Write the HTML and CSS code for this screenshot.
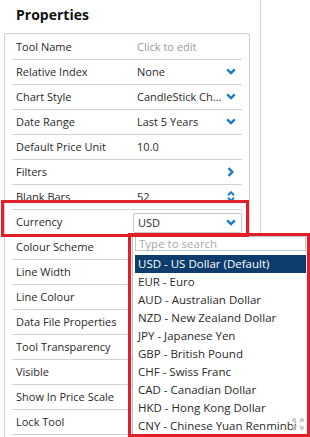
FILE: index.html
```html
<!DOCTYPE html>
<html>
<head>
<meta charset="utf-8">
<link rel="stylesheet" href="styles.css">
</head>
<body>
<div class="page">
  <div class="panel">
    <div class="title">Properties</div>
    <div class="props">
      <div class="row"><span class="label">Tool Name</span><span class="value muted">Click to edit</span></div>
      <div class="row"><span class="label">Relative Index</span><span class="value">None</span>
        <svg class="ico" width="10" height="7" viewBox="0 0 10 7"><path d="M1.2 1.3 L5 5.1 L8.8 1.3" /></svg></div>
      <div class="row"><span class="label">Chart Style</span><span class="value">CandleStick Ch...</span>
        <svg class="ico" width="10" height="7" viewBox="0 0 10 7"><path d="M1.2 1.3 L5 5.1 L8.8 1.3" /></svg></div>
      <div class="row"><span class="label">Date Range</span><span class="value">Last 5 Years</span>
        <svg class="ico" width="10" height="7" viewBox="0 0 10 7"><path d="M1.2 1.3 L5 5.1 L8.8 1.3" /></svg></div>
      <div class="row"><span class="label">Default Price Unit</span><span class="value">10.0</span></div>
      <div class="row"><span class="label">Filters</span><span class="value"></span>
        <svg class="ico ico-r" width="7" height="10" viewBox="0 0 7 10"><path d="M1.5 1.2 L5.3 5 L1.5 8.8" /></svg></div>
      <div class="row"><span class="label">Blank Bars</span><span class="value">52</span>
        <svg class="ico ico-ud" width="8" height="11" viewBox="0 0 8 11"><path d="M1 4.3 L4 1.3 L7 4.3 M1 6.7 L4 9.7 L7 6.7" /></svg></div>
      <div class="row"><span class="label">Currency</span>
        <span class="select"><span class="value">USD</span>
          <svg class="ico" width="10" height="7" viewBox="0 0 10 7"><path d="M1.2 1.3 L5 5.1 L8.8 1.3" /></svg></span></div>
      <div class="row"><span class="label">Colour Scheme</span></div>
      <div class="row"><span class="label">Line Width</span></div>
      <div class="row"><span class="label">Line Colour</span></div>
      <div class="row"><span class="label">Data File Properties</span></div>
      <div class="row"><span class="label">Tool Transparency</span></div>
      <div class="row"><span class="label">Visible</span></div>
      <div class="row"><span class="label">Show In Price Scale</span></div>
      <div class="row"><span class="label">Lock Tool</span></div>
    </div>
  </div>

  <div class="dropdown">
    <div class="search">Type to search</div>
    <ul class="list">
      <li class="active">USD - US Dollar (Default)</li>
      <li>EUR - Euro</li>
      <li>AUD - Australian Dollar</li>
      <li>NZD - New Zealand Dollar</li>
      <li>JPY - Japanese Yen</li>
      <li>GBP - British Pound</li>
      <li>CHF - Swiss Franc</li>
      <li>CAD - Canadian Dollar</li>
      <li>HKD - Hong Kong Dollar</li>
      <li>CNY - Chinese Yuan Renminbi</li>
    </ul>
    <svg class="resize" width="12" height="12" viewBox="0 0 12 12">
      <path d="M1 1 L4.5 4.5 M1 1 H4 M1 1 V4 M11 1 L7.5 4.5 M11 1 H8 M11 1 V4 M1 11 L4.5 7.5 M1 11 H4 M1 11 V8 M11 11 L7.5 7.5 M11 11 H8 M11 11 V8" />
    </svg>
  </div>

  <div class="mark mark-row"></div>
  <div class="mark mark-drop"></div>
</div>
</body>
</html>
```

FILE: styles.css
```css
* { box-sizing: border-box; }
html, body { margin: 0; padding: 0; background: #fff; }
body {
  font-family: "Open Sans", "Liberation Sans", sans-serif;
  color: #333;
}
.page {
  position: relative;
  width: 310px;
  height: 437px;
  overflow: hidden;
}
.panel {
  width: 261px;
  height: 437px;
  border-right: 1px solid #d0d0d0;
}
.title {
  height: 33px;
  padding-left: 16px;
  font-size: 14px;
  font-weight: 700;
  line-height: 30px;
  color: #111;
}
.props {
  margin-left: 4px;
  width: 246px;
  height: 404px;
  border: 1px solid #cfcfcf;
  border-bottom: none;
  border-top-left-radius: 3px;
  border-top-right-radius: 3px;
  padding: 1px 7px 0 7px;
}
.row {
  display: flex;
  align-items: center;
  height: 25px;
  border-bottom: 1px solid #d2d2d2;
  padding-left: 4px;
  padding-bottom: 1px;
  font-size: 11px;
}
.label {
  width: 121px;
  flex: none;
  color: #2a2a2a;
}
.value {
  flex: 1;
  color: #2a2a2a;
  white-space: nowrap;
  overflow: hidden;
}
.muted { color: #9a9a9a; }
.ico {
  flex: none;
  margin-right: 6px;
  fill: none;
  stroke: #1a7cc6;
  stroke-width: 2.4;
}
.ico-r { margin-right: 8px; }
.ico-ud { margin-right: 7px; stroke-width: 2; }
.select {
  flex: 1;
  display: flex;
  align-items: center;
  height: 20px;
  margin-left: -4px;
  margin-top: 2px;
  padding-left: 4px;
  border: 1px solid #c8c8c8;
  border-radius: 2px;
}
.select .ico { margin-right: 5px; }

.dropdown {
  position: absolute;
  left: 132px;
  top: 235px;
  width: 177px;
  height: 210px;
  background: #fff;
  border: 1px solid #bdbdbd;
  padding: 0 2px;
}
.search {
  height: 15px;
  border: 1px solid #c4c4c4;
  padding-left: 3px;
  font-size: 11.5px;
  line-height: 13px;
  color: #a8a8a8;
}
.list {
  list-style: none;
  margin: 4px 0 0 0;
  padding: 0;
}
.list li {
  height: 18px;
  line-height: 18px;
  padding-left: 3px;
  font-size: 11.5px;
  color: #2a2a2a;
  white-space: nowrap;
  overflow: hidden;
}
.list li.active {
  background: #0e3c6d;
  color: #fff;
}
.resize {
  position: absolute;
  left: 159px;
  top: 182px;
  fill: none;
  stroke: #c4c4c4;
  stroke-width: 1.4;
}

.mark {
  position: absolute;
  border: 3px solid #e21f26;
}
.mark-row {
  left: 1px;
  top: 200px;
  width: 248px;
  height: 37px;
}
.mark-drop {
  left: 128px;
  top: 233px;
  width: 182px;
  height: 204px;
}
```
